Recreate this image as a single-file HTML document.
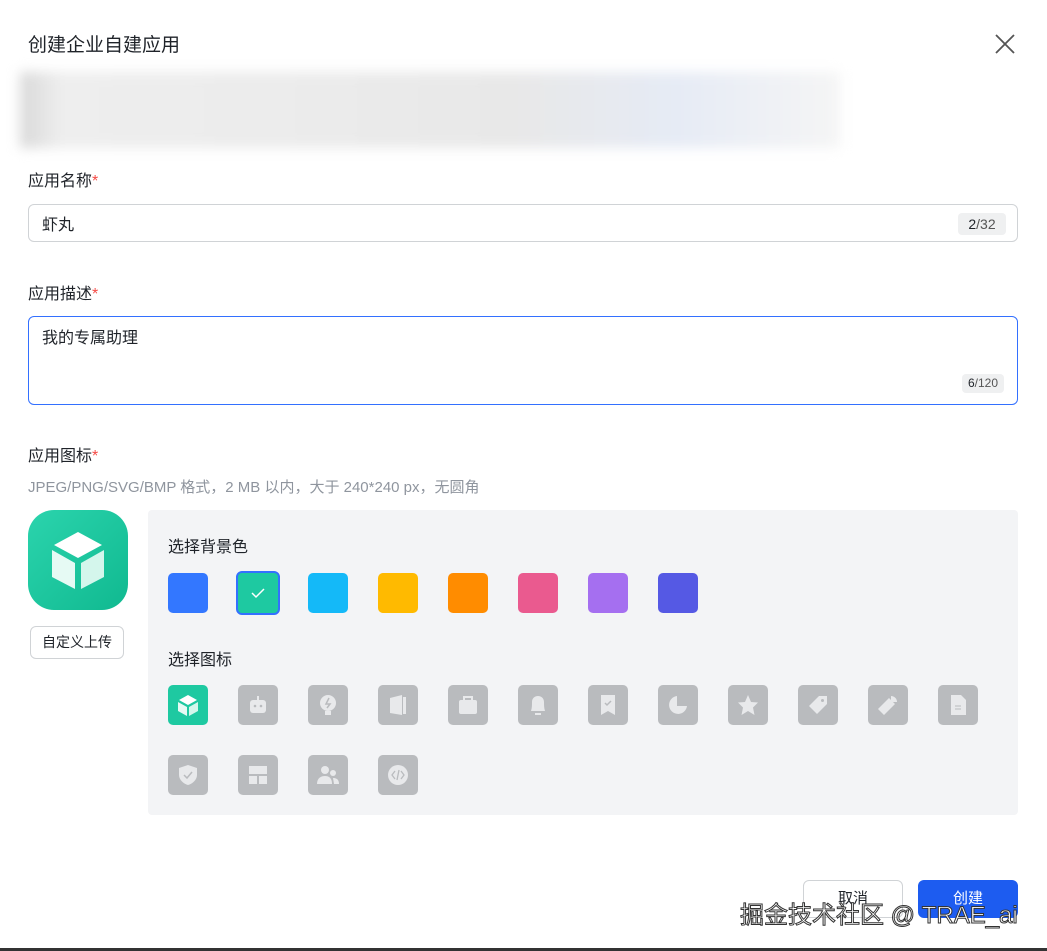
<!DOCTYPE html>
<html><head><meta charset="utf-8"><style>
*{box-sizing:border-box;margin:0;padding:0}
body{width:1047px;height:951px;background:#fff;font-family:"Liberation Sans","Noto Sans CJK SC",sans-serif;color:#1f2329;position:relative;overflow:hidden}
.a{position:absolute}
.lbl{font-size:16px;color:#1f2329}
.lbl i{color:#f54a45;font-style:normal}
.sw{position:absolute;top:573px;width:40px;height:40px;border-radius:5px}
.ic{position:absolute;width:40px;height:40px;border-radius:5px;background:#b9bbbe}
.ic svg{position:absolute;left:8px;top:8px;width:24px;height:24px}
</style></head><body>
<div class="a" style="left:28px;top:30px;font-size:19px">创建企业自建应用</div>
<svg class="a" style="left:993px;top:32px" width="24" height="24" viewBox="0 0 24 24"><path d="M3 3L21 21M21 3L3 21" stroke="#555" stroke-width="1.8"/></svg>
<div class="a" style="left:20px;top:72px;width:820px;height:76px;background:linear-gradient(90deg,#d8d8d8 0,#eee 5%,#ececec 30%,#e8e8e8 60%,#e6ebf5 80%,#f5f5f5 100%);filter:blur(6px)"></div>
<div class="a lbl" style="left:28px;top:167px">应用名称<i>*</i></div>
<div class="a" style="left:28px;top:204px;width:990px;height:38px;border:1px solid #d0d3d6;border-radius:6px"></div>
<div class="a" style="left:42px;top:211px;font-size:16px">虾丸</div>
<div class="a" style="left:958px;top:213px;width:48px;height:22px;background:#eff0f1;border-radius:4px;font-size:14px;color:#555;text-align:center;line-height:22px"><b style="font-weight:normal;color:#1f2329">2</b>/32</div>
<div class="a lbl" style="left:28px;top:280px">应用描述<i>*</i></div>
<div class="a" style="left:28px;top:316px;width:990px;height:89px;border:1px solid #3370ff;border-radius:6px"></div>
<div class="a" style="left:42px;top:324px;font-size:16px">我的专属助理</div>
<div class="a" style="left:962px;top:374px;width:42px;height:19px;background:#eff0f1;border-radius:4px;font-size:12px;color:#555;text-align:center;line-height:19px"><span style="color:#1f2329">6</span>/120</div>
<div class="a lbl" style="left:28px;top:442px">应用图标<i>*</i></div>
<div class="a" style="left:28px;top:476px;font-size:15px;color:#8f959e">JPEG/PNG/SVG/BMP 格式，2 MB 以内，大于 240*240 px，无圆角</div>
<div class="a" style="left:28px;top:510px;width:100px;height:100px;border-radius:26px;background:linear-gradient(135deg,#2bd4ad,#10b990)">
<svg style="position:absolute;left:17px;top:17px" width="66" height="66" viewBox="0 0 66 66"><path d="M33 5L57 18L33 31L9 18Z" fill="#fff"/><path d="M7 23L30 36V62L7 50Z" fill="#e6faf4"/><path d="M59 23L36 36V62L59 50Z" fill="#d4f6ec"/></svg></div>
<div class="a" style="left:30px;top:626px;width:94px;height:33px;border:1px solid #d0d3d6;border-radius:6px;font-size:14px;text-align:center;line-height:31px">自定义上传</div>
<div class="a" style="left:148px;top:510px;width:870px;height:305px;background:#f3f4f6;border-radius:4px"></div>
<div class="a" style="left:168px;top:533px;font-size:16px">选择背景色</div>
<div class="sw" style="left:168px;background:#3377ff"></div>
<div class="sw" style="left:236px;top:571px;width:44px;height:44px;border:2px solid #3370ff;background:#1ec9a1;border-radius:6px"><svg style="position:absolute;left:12px;top:12px" width="16" height="16" viewBox="0 0 16 16"><path d="M2 8L6 12L14 4" stroke="#fff" stroke-width="1.5" fill="none"/></svg></div>
<div class="sw" style="left:308px;background:#14b9f8"></div>
<div class="sw" style="left:378px;background:#ffba00"></div>
<div class="sw" style="left:448px;background:#ff8c00"></div>
<div class="sw" style="left:518px;background:#ea5a8f"></div>
<div class="sw" style="left:588px;background:#a56ff0"></div>
<div class="sw" style="left:658px;background:#5559e4"></div>
<div class="a" style="left:168px;top:646px;font-size:16px">选择图标</div>
<div class="ic" style="left:168px;top:685px;background:#1ec9a1"><svg viewBox="0 0 24 24"><path d="M12 2L21 7L12 12L3 7Z" fill="#fff"/><path d="M2 9L11 14V23L2 18Z" fill="#e6faf4"/><path d="M22 9L13 14V23L22 18Z" fill="#d4f6ec"/></svg></div>
<div class="ic" style="left:238px;top:685px"><svg viewBox="0 0 24 24"><rect x="4" y="7" width="16" height="13" rx="3" fill="#e8e9eb"/><circle cx="9" cy="13" r="1.3" fill="#b9bbbe"/><circle cx="15" cy="13" r="1.3" fill="#b9bbbe"/><path d="M12 3V7" stroke="#e8e9eb" stroke-width="2"/></svg></div>
<div class="ic" style="left:308px;top:685px"><svg viewBox="0 0 24 24"><circle cx="12" cy="10" r="8" fill="#e8e9eb"/><rect x="9" y="18" width="6" height="4" fill="#e8e9eb"/><path d="M13 5L10 11H14L11 15" stroke="#b9bbbe" stroke-width="1.5" fill="none"/></svg></div>
<div class="ic" style="left:378px;top:685px"><svg viewBox="0 0 24 24"><path d="M4 5L16 2V22L4 20Z" fill="#e8e9eb"/><rect x="17" y="4" width="3" height="17" fill="#e8e9eb"/></svg></div>
<div class="ic" style="left:448px;top:685px"><svg viewBox="0 0 24 24"><rect x="3" y="7" width="18" height="14" rx="2" fill="#e8e9eb"/><path d="M8 7V4H16V7" stroke="#e8e9eb" stroke-width="2" fill="none"/></svg></div>
<div class="ic" style="left:518px;top:685px"><svg viewBox="0 0 24 24"><path d="M5 18C6 15 6 12 6 9C6 5 9 3 12 3C15 3 18 5 18 9C18 12 18 15 19 18Z" fill="#e8e9eb"/><rect x="9" y="20" width="6" height="2" fill="#e8e9eb"/></svg></div>
<div class="ic" style="left:588px;top:685px"><svg viewBox="0 0 24 24"><path d="M5 2H19V22L12 18L5 22Z" fill="#e8e9eb"/><path d="M9 10L11 12L15 8" stroke="#b9bbbe" stroke-width="1.5" fill="none"/></svg></div>
<div class="ic" style="left:658px;top:685px"><svg viewBox="0 0 24 24"><path d="M11 3A9 9 0 1 0 21 13H11Z" fill="#e8e9eb"/></svg></div>
<div class="ic" style="left:728px;top:685px"><svg viewBox="0 0 24 24"><path d="M12 2L15 9L22 9.5L17 14.5L18.5 22L12 18L5.5 22L7 14.5L2 9.5L9 9Z" fill="#e8e9eb"/></svg></div>
<div class="ic" style="left:798px;top:685px"><svg viewBox="0 0 24 24"><path d="M13 3H21V11L11 21L3 13Z" fill="#e8e9eb"/><circle cx="16.5" cy="7.5" r="1.5" fill="#b9bbbe"/></svg></div>
<div class="ic" style="left:868px;top:685px"><svg viewBox="0 0 24 24"><path d="M15 3A6 6 0 0 1 21 9L17 9L15 7L15 3ZM13 5L19 11L8 22L2 16Z" fill="#e8e9eb"/></svg></div>
<div class="ic" style="left:938px;top:685px"><svg viewBox="0 0 24 24"><path d="M5 2H15L20 7V22H5Z" fill="#e8e9eb"/><path d="M9 13H15M9 16H15" stroke="#b9bbbe"/></svg></div>
<div class="ic" style="left:168px;top:755px"><svg viewBox="0 0 24 24"><path d="M12 2L21 5V12C21 17 16 21 12 22C8 21 3 17 3 12V5Z" fill="#e8e9eb"/><path d="M8 12L11 15L16 9" stroke="#b9bbbe" stroke-width="1.5" fill="none"/></svg></div>
<div class="ic" style="left:238px;top:755px"><svg viewBox="0 0 24 24"><rect x="3" y="3" width="18" height="8" fill="#e8e9eb"/><rect x="3" y="13" width="8" height="8" fill="#e8e9eb"/><rect x="13" y="13" width="8" height="8" fill="#e8e9eb"/></svg></div>
<div class="ic" style="left:308px;top:755px"><svg viewBox="0 0 24 24"><circle cx="9" cy="7" r="4" fill="#e8e9eb"/><path d="M1 21C1 15 5 13 9 13C13 13 16 15 16 21Z" fill="#e8e9eb"/><circle cx="17" cy="10" r="3" fill="#e8e9eb"/><path d="M17 15C20 15 23 16 23 21H18Z" fill="#e8e9eb"/></svg></div>
<div class="ic" style="left:378px;top:755px"><svg viewBox="0 0 24 24"><circle cx="12" cy="12" r="10" fill="#e8e9eb"/><path d="M9 8L6 12L9 16M15 8L18 12L15 16M13 7L11 17" stroke="#b9bbbe" stroke-width="1.3" fill="none"/></svg></div>
<div class="a" style="left:803px;top:880px;width:100px;height:38px;border:1px solid #d0d3d6;border-radius:6px;font-size:15px;text-align:center;line-height:36px">取消</div>
<div class="a" style="left:918px;top:880px;width:100px;height:38px;background:#1d5cf0;border-radius:6px;font-size:15px;color:#fff;text-align:center;line-height:38px">创建</div>
<div class="a" style="left:740px;top:895px;font-size:24px;color:#fff;-webkit-text-stroke:1px #333;white-space:nowrap">掘金技术社区 @ TRAE_ai</div>
<div class="a" style="left:0;top:948px;width:1047px;height:3px;background:#333"></div>
</body></html>
